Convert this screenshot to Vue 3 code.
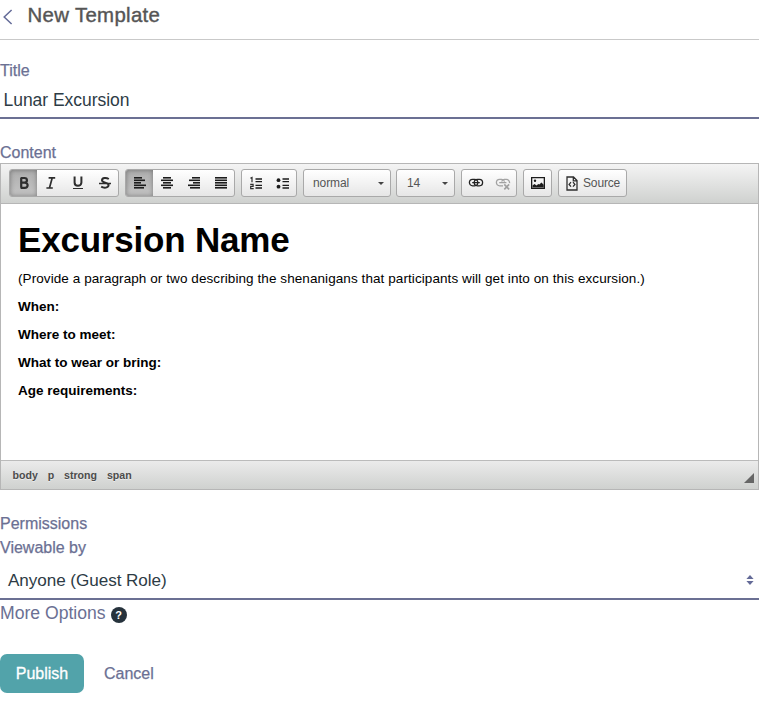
<script setup>
import { ref } from 'vue'

const title = ref('Lunar Excursion')
const fields = ['When:', 'Where to meet:', 'What to wear or bring:', 'Age requirements:']
const path = ['body', 'p', 'strong', 'span']
const aligns = [
  { name: 'left', rows: [[0, 8], [0, 11], [0, 7], [0, 12], [0, 10]] },
  { name: 'center', rows: [[2, 8], [0, 12], [2, 8], [0, 12], [2, 8]] },
  { name: 'right', rows: [[4, 8], [1, 11], [5, 7], [0, 12], [2, 10]] },
  { name: 'justify', rows: [[0, 12], [0, 12], [0, 12], [0, 12], [0, 12]] }
]
</script>

<template>
  <main class="page">
    <header class="header">
      <svg class="back" width="10" height="16" viewBox="0 0 10 16"><path d="M8.6 1 1.2 8l7.4 7" /></svg>
      <h1>New Template</h1>
    </header>

    <label class="label title-label">Title</label>
    <div class="title-field">{{ title }}</div>

    <label class="label content-label">Content</label>
    <section class="editor">
      <div class="toolbar">
        <div class="group">
          <span class="btn on first"><svg width="16" height="16" viewBox="0 0 16 16"><path class="ln bold" d="M4.6 3h3.8c3.4 0 3.4 4.6 0 4.6H5.4h3.4c3.8 0 3.8 5.2-.2 5.2h-4M5.2 3v9.8" /></svg></span>
          <span class="btn"><svg width="16" height="16" viewBox="0 0 16 16"><path class="ln mid" d="M5.6 2.8h6.6M3.4 13h6.4M9.2 3 6.5 12.8" /></svg></span>
          <span class="btn"><svg width="16" height="16" viewBox="0 0 16 16"><path class="ln heavy" d="M4.6 1.5v6c0 4.4 6.8 4.4 6.8 0v-6" /><path class="ln thin" d="M3 13.5h10" /></svg></span>
          <span class="btn"><svg width="16" height="16" viewBox="0 0 16 16"><path class="ln heavy" d="M11.8 4C9.4 2.4 5 2.5 5 5.2c0 3 6.6 1.8 6.6 4.9 0 3-4.8 3.2-7.4 1.6" /><path class="ln" d="M2 8.5h12" /></svg></span>
        </div>
        <div class="group">
          <span v-for="(a, i) in aligns" :key="a.name" class="btn" :class="{ on: i === 0, first: i === 0 }">
            <svg width="12" height="12" viewBox="0 0 12 12">
              <rect v-for="(r, n) in a.rows" :key="n" :x="r[0]" :y="n * 2.5" :width="r[1]" height="1.6" />
            </svg>
          </span>
        </div>
        <div class="group">
          <span class="btn"><svg width="14" height="14" viewBox="0 0 14 14"><path class="ln bar" d="M6.5 3h6.5M6.5 5.6h6.5M6.5 9.4h6.5M6.5 12h6.5" /><path class="ln num" d="M1.4 2.2 3 1.4v4.8M1.2 8.4h2.9v2H1.7v2.2h3" /></svg></span>
          <span class="btn"><svg width="14" height="14" viewBox="0 0 14 14"><path class="ln bar" d="M6.5 3h6.5M6.5 5.6h6.5M6.5 9.4h6.5M6.5 12h6.5" /><circle cx="2.5" cy="4.2" r="1.9" /><circle cx="2.5" cy="10.7" r="1.9" /></svg></span>
        </div>
        <div class="group combo normal"><span>normal</span><i class="caret"></i></div>
        <div class="group combo size"><span>14</span><i class="caret"></i></div>
        <div class="group">
          <span class="btn"><svg width="16" height="16" viewBox="0 0 16 16"><g class="chain"><rect x="1.4" y="4.4" width="8.4" height="6.4" rx="3.2" /><rect x="6.2" y="4.4" width="8.4" height="6.4" rx="3.2" /><path d="M4.2 7.6h7.6" /></g></svg></span>
          <span class="btn off"><svg width="16" height="16" viewBox="0 0 16 16"><g class="chain"><path d="M8 10.8H4.6a3.2 3.2 0 0 1 0-6.4h2a3.2 3.2 0 0 1 3 2.2M6.6 6.4a3.2 3.2 0 0 1 2.8-2h2a3.2 3.2 0 0 1 3.1 3.7M4.2 7.6h7.2" /><path class="cross" d="m9.3 9.4 4.8 5M14.1 9.4l-4.8 5" /></g></svg></span>
        </div>
        <div class="group">
          <span class="btn"><svg width="16" height="16" viewBox="0 0 16 16"><path fill-rule="evenodd" d="M1 2h14v12H1zM2.3 3.3v9.4h11.4V3.3z" /><path d="M2.5 12.5V10.6l2-1.5 2 1.3 1.8-1.3 1 .5 2.2-2.2 2.2 2.4v2.7z" /><circle cx="5" cy="5.8" r="1.2" /></svg></span>
        </div>
        <div class="group source">
          <svg width="12" height="15" viewBox="0 0 12 15"><path class="ln page-line" d="M1 1h6.5L11 4.5V14H1zM7.3 1v3.8H11" /><path class="ln page-line" d="M5 6.2 3.1 8.4 5 10.6M7 6.2l1.9 2.2L7 10.6" /></svg>
          <span>Source</span>
        </div>
      </div>
      <article class="body">
        <h2>Excursion Name</h2>
        <p>(Provide a paragraph or two describing the shenanigans that participants will get into on this excursion.)</p>
        <p v-for="f in fields" :key="f"><strong>{{ f }}</strong></p>
      </article>
      <footer class="status">
        <span v-for="p in path" :key="p">{{ p }}</span>
        <svg class="grip" width="10" height="10" viewBox="0 0 10 10"><path d="M10 0v10H0z" /></svg>
      </footer>
    </section>

    <div class="label permissions">Permissions</div>
    <label class="label viewable">Viewable by</label>
    <div class="select">
      <span>Anyone (Guest Role)</span>
      <svg width="8" height="10" viewBox="0 0 8 10"><path d="M4 0 7.6 4H.4zM4 10 .4 6h7.2z" /></svg>
    </div>
    <div class="more">
      <span>More Options</span>
      <b class="help">?</b>
    </div>
    <div class="actions">
      <button class="publish">Publish</button>
      <a class="cancel">Cancel</a>
    </div>
  </main>
</template>

<style>
body { background: #fff; overflow: hidden; }
</style>

<style scoped>
* { box-sizing: border-box; }
.page { height: 704px; font-family: "Liberation Sans", Arial, sans-serif; color: #6b7093; }
.header { display: flex; height: 40px; border-bottom: 1px solid #c9c9c9; }
.back { margin: 9px 0 0 3px; fill: none; stroke: #646b98; stroke-width: 1.5; }
h1 { margin: 0 0 0 14.5px; font-size: 20.4px; line-height: 31px; font-weight: 400; color: #555; letter-spacing: .33px; -webkit-text-stroke: .4px #555; }
.label { display: block; font-size: 16px; line-height: 24px; -webkit-text-stroke: .25px #6b7093; }
.title-label { margin-top: 19px; height: 24px; }
.title-field { height: 36px; padding-left: 3.5px; border-bottom: 2px solid #6b7093; color: #2d3b45; font-size: 17.5px; line-height: 35px; letter-spacing: -.03px; }
.content-label { margin-top: 21px; height: 23px; line-height: 26px; }

.editor { height: 327px; border: 1px solid #b6b6b6; display: flex; flex-direction: column; }
.toolbar { display: flex; height: 40px; padding: 5px 8px 0; gap: 6px; border-bottom: 1px solid #b6b6b6; background: linear-gradient(#f4f4f4, #cfd1cf); align-items: flex-start; }
.group { display: flex; height: 28px; border: 1px solid #a9a9a9; border-radius: 3px; background: linear-gradient(#fff, #e6e6e6); overflow: hidden; fill: #1c1c1c; flex: none; }
.btn { width: 27px; height: 26px; display: flex; align-items: center; justify-content: center; }
.btn.on { background: linear-gradient(#aeaeae, #c4c4c4); box-shadow: inset 0 0 5px rgba(0, 0, 0, .35); }
.ln { fill: none; stroke: #2e2e2e; stroke-width: 1.4; }
.bold { stroke-width: 2.2; }
.heavy { stroke-width: 2; }
.mid { stroke-width: 1.7; }
.thin { stroke-width: 1; }
.bar { stroke: #1c1c1c; stroke-width: 1.3; }
.num { stroke-width: 1.2; }
.chain { fill: none; stroke: #222; stroke-width: 1.3; }
.cross { stroke-width: 1.6; }
.off { opacity: .38; }
.combo { align-items: center; font-size: 12px; letter-spacing: -.1px; color: #555; padding: 0 6px 0 9px; justify-content: space-between; }
.combo span { line-height: 28px; }
.normal { width: 88px; }
.size { width: 59px; margin-left: -1px; padding-left: 10px; }
.caret { border: 3px solid transparent; border-top-color: #444; border-bottom: 0; }
.source { width: 69px; padding-left: 7px; align-items: center; gap: 5px; color: #555; font-size: 12px; letter-spacing: -.15px; }
.page-line { stroke-width: 1.3; }

.body { flex: 1; padding: 18px 17px 0; color: #000; }
h2 { margin: 0 0 13px; font-size: 35px; line-height: 36px; letter-spacing: -.2px; }
p { margin: 0 0 12px; font-size: 13.5px; line-height: 16px; letter-spacing: .08px; white-space: nowrap; }
strong { letter-spacing: 0; }
.status { display: flex; height: 29px; padding: 0 4px 0 11.5px; gap: 9.9px; align-items: center; border-top: 1px solid #bbb; background: linear-gradient(#ebebeb, #cfd1cf); color: #4c4c4c; font-size: 10.6px; font-weight: 700; text-shadow: 0 1px 0 rgba(255, 255, 255, .5); }
.grip { margin: 5px 0 0 auto; fill: #666; }

.permissions { margin-top: 22px; }
.select { display: flex; justify-content: space-between; align-items: center; height: 40px; padding: 0 5px 0 8px; border-bottom: 2px solid #6b7093; color: #2d3b45; font-size: 17.1px; letter-spacing: -.05px; }
.select span { line-height: 40px; margin-top: 3px; }
.select svg { fill: #646b98; margin-top: 1px; }
.more { display: flex; align-items: center; height: 26px; gap: 5px; font-size: 17.6px; line-height: 26px; }
.help { width: 16px; height: 16px; margin-top: 3px; border-radius: 50%; background: #26323c; color: #fff; font-size: 11px; line-height: 16px; text-align: center; }
.actions { display: flex; align-items: center; margin-top: 28px; gap: 20px; font-size: 16px; line-height: 20px; }
.publish { width: 84px; height: 39px; padding: 1px 0 0; border: 0; border-radius: 7px; background: #52a3aa; color: #fff; font: inherit; -webkit-text-stroke: .3px #fff; }
.cancel { padding-top: 1px; -webkit-text-stroke: .25px #6b7093; }
</style>
